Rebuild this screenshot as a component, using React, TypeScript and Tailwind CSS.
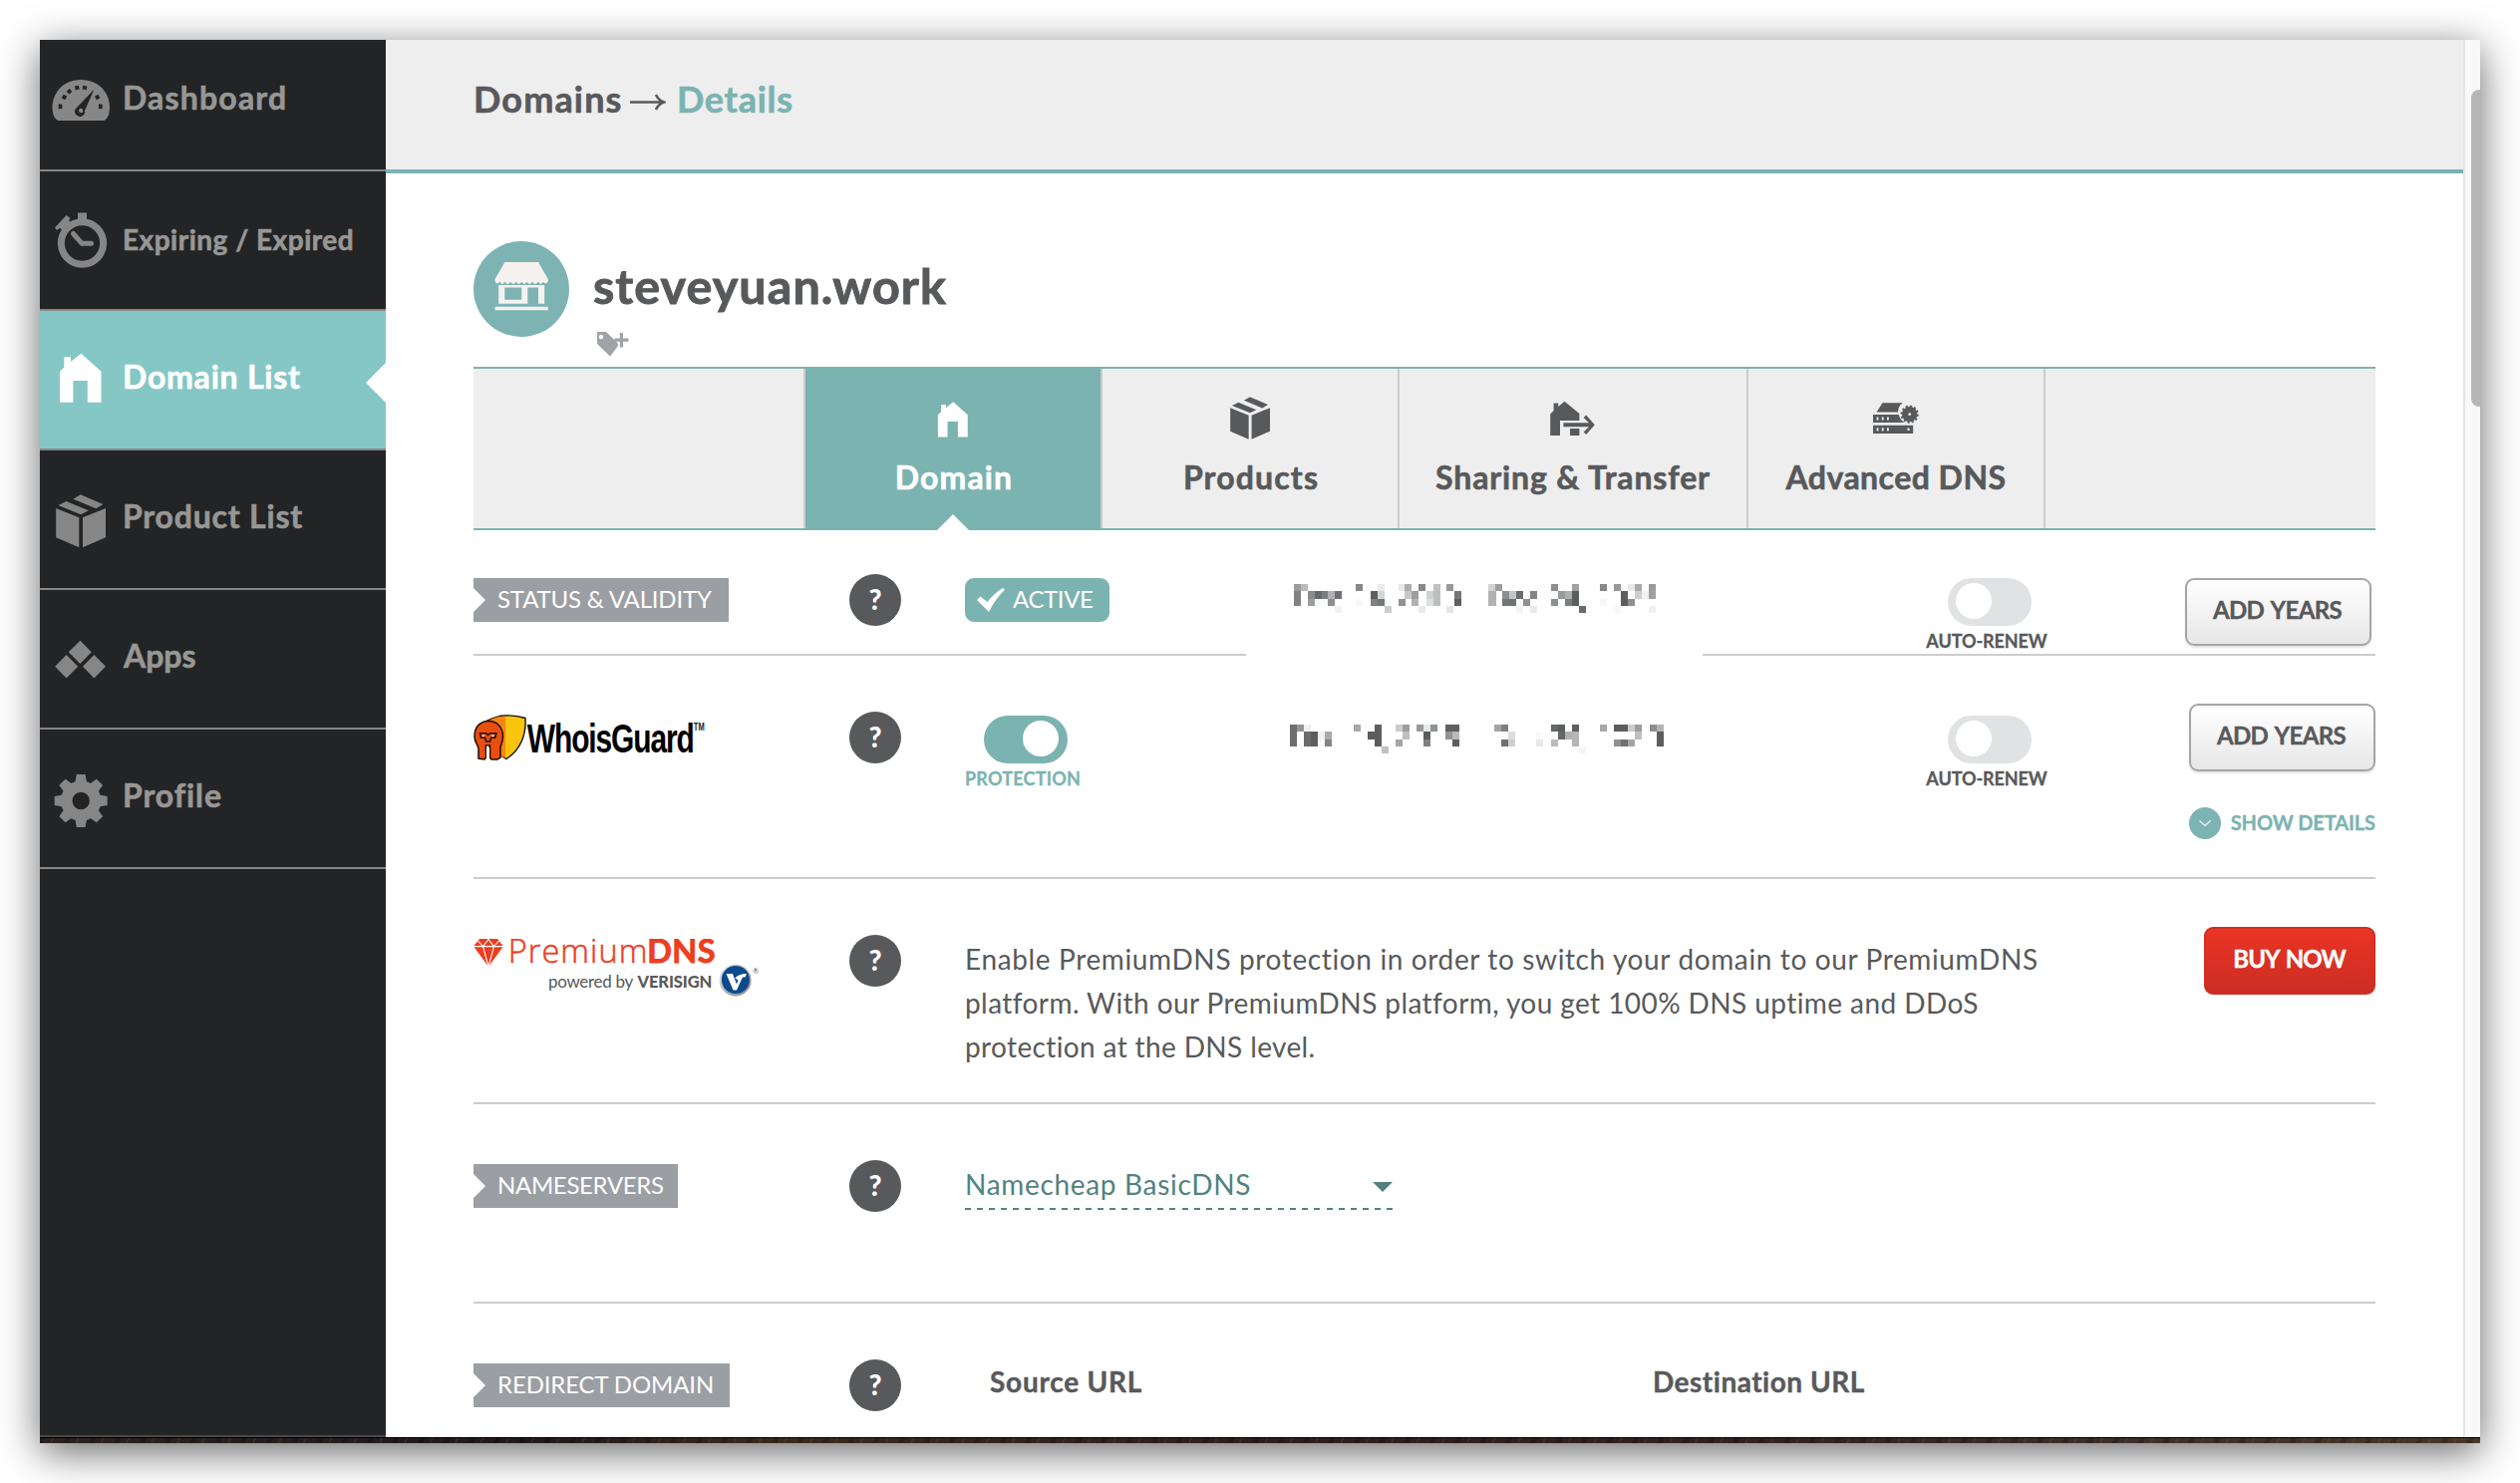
import type { ReactNode } from "react";

const HOUSE =
  "M11 54.7V23.7L15.3 19.5V9.3H22V14L32.4 5.7L52.5 23.7V54.7H38.8V33H24.4V54.7Z";

const BOX =
  "M7.2 21L30.3 30.3V60.3L7.2 50.3ZM34 30.3L57 21V50.3L34 60.3ZM31.9 7.3L54.4 17L47.4 21.3L24.4 11.7ZM17.4 14L40 23.3L32 27.3L9.4 18Z";

const TEETH = [0, 45, 90, 135, 180, 225, 270, 315];

function DashboardIcon() {
  return (
    <svg viewBox="0 0 64 64" className="h-16 w-16" fill="currentColor">
      <path d="M10.500 52C6 52 3.500 45.500 3.500 39C3.500 22.500 16 11 32.200 11C48.500 11 61 22.500 61 39C61 45.500 58.500 52 54 52Z" />
      <g fill="#232426">
        <rect x="9.700" y="35.500" width="3.600" height="4.600" />
        <rect x="13.500" y="26.500" width="4" height="4" transform="rotate(-65 15.500 28.500)" />
        <rect x="18.500" y="20.700" width="4" height="4" transform="rotate(-40 20.500 22.700)" />
        <rect x="26.300" y="17" width="4" height="4" transform="rotate(-12 28.300 19)" />
        <rect x="34" y="17" width="4" height="4" transform="rotate(10 36 19)" />
        <rect x="46.700" y="26.500" width="4" height="4" transform="rotate(65 48.700 28.500)" />
        <rect x="50" y="35.500" width="3.600" height="4.600" />
        <path d="M45.500 20.500L36 42A5 5 0 1 1 28 39Z" />
      </g>
      <circle cx="32.200" cy="42" r="2.200" />
    </svg>
  );
}

function StopwatchIcon() {
  return (
    <svg viewBox="0 0 64 64" className="h-16 w-16" fill="currentColor">
      <circle cx="33.500" cy="35" r="21.200" fill="none" stroke="currentColor" strokeWidth="7" />
      <path d="M29 4.500H38V13H29Z" />
      <path d="M6 19.500L17.500 7L21.500 10L20 12.500L23 15L14.500 23L11 19.800L8 22Z" />
      <path d="M24.500 25.500L33 35.200H42.500" fill="none" stroke="currentColor" strokeWidth="5" strokeLinecap="round" strokeLinejoin="round" />
    </svg>
  );
}

function HouseIcon() {
  return (
    <svg viewBox="0 0 64 64" className="h-16 w-16" fill="currentColor">
      <path d={HOUSE} />
    </svg>
  );
}

function BoxIcon() {
  return (
    <svg viewBox="0 0 64 64" className="h-16 w-16" fill="currentColor">
      <path d={BOX} />
    </svg>
  );
}

function AppsIcon() {
  return (
    <svg viewBox="0 0 64 64" className="h-16 w-16" fill="currentColor">
      <path d="M31.400 13.700L42.800 25.300L31.400 37L19.800 25.300ZM17.600 27.900L29.200 39.700L17.600 51.400L6.200 39.700ZM45.400 27.900L57 39.700L45.400 51.400L34 39.700Z" />
    </svg>
  );
}

function GearIcon() {
  return (
    <svg viewBox="0 0 64 64" className="h-16 w-16" fill="currentColor">
      <circle cx="32.200" cy="34.500" r="14.400" fill="none" stroke="currentColor" strokeWidth="11.400" />
      {TEETH.map((a) => (
        <path key={a} d="M26 18L27.800 8H36.600L38.400 18Z" transform={`rotate(${a} 32.200 34.500)`} />
      ))}
    </svg>
  );
}

function TabHouseIcon() {
  return (
    <svg viewBox="0 0 52 52" className="h-[52px] w-[52px]" fill="currentColor">
      <path d={HOUSE} transform="translate(3 7.200) scale(.719)" />
    </svg>
  );
}

function TabBoxIcon() {
  return (
    <svg viewBox="0 0 52 52" className="h-[52px] w-[52px]" fill="currentColor">
      <path d={BOX} transform="translate(.4 .5) scale(.8)" />
    </svg>
  );
}

function TransferIcon() {
  return (
    <svg viewBox="0 0 52 52" className="h-[52px] w-[52px]" fill="currentColor">
      <path d="M3.200 45V23.500L6.600 20V12.500H11.200V16L17.500 10.700L32.400 23V30H13V45Z" />
      <path d="M23 38H32.400V45H23Z" />
      <path d="M16.400 32.300H42L36.600 27L39.200 24.600L47.800 34.300L39.200 44L36.600 41.600L42 36.300H16.400Z" />
    </svg>
  );
}

function ServerIcon() {
  return (
    <svg viewBox="0 0 52 52" className="h-[52px] w-[52px]" fill="currentColor">
      <path d="M12.500 12.300H32.800C29.500 14.500 28 18 28.200 21.400H6.500ZM3 24H28.700C29.800 28 32 30.700 34.500 32H3ZM3 34.800H43.200V43H3Z" />
      <circle cx="39.700" cy="23.700" r="7.600" />
      <circle cx="39.700" cy="23.700" r="8" fill="none" stroke="currentColor" strokeWidth="2.200" strokeDasharray="2.090 2.090" />
      <g fill="#eeeeee">
        <circle cx="39.700" cy="23.700" r="1.400" />
        {[28, 38.800].map((y) =>
          [7.500, 12.700, 17.900].map((x) => (
            <rect key={`${x}-${y}`} x={x - 0.900} y={y - 1.500} width="1.800" height="3" />
          ))
        )}
        <circle cx="38.500" cy="38.800" r="1.300" />
      </g>
    </svg>
  );
}

function StoreBadge() {
  return (
    <svg viewBox="0 0 96 96" className="h-24 w-24 shrink-0">
      <circle cx="48" cy="48" r="48" fill="#7db3b3" />
      <g fill="#f5f1ee">
        <path d="M31.300 21H65L74.800 38V40.500Q72.500 44.500 70 40.800Q67.500 45 65 40.800Q62 45 59 40.800Q56.200 45 53.500 40.800Q50.800 45 48.200 40.800Q45.500 45 42.800 40.800Q40 45 37.300 40.800Q34.300 45 31.500 40.800Q28.800 45 26.300 40.800Q23.800 44.500 21.600 40.500V38Z" />
        <path fillRule="evenodd" d="M25.200 44H71.200V62.700H65V46.600H54.300V62.700H25.200ZM31.300 46.600V58.700H48.200V46.600Z" />
        <path d="M21.600 65.800H74.800V69.200H21.600Z" />
      </g>
    </svg>
  );
}

function TagPlusIcon() {
  return (
    <svg viewBox="0 0 33 25" className="h-[25px] w-[33px]" fill="#a0a2a6">
      <path fillRule="evenodd" d="M0 0H9L20 10.500Q22 13 20 15.500L13 24.500L0 12ZM4 2.800A2.200 2.200 0 1 0 4 7.200A2.200 2.200 0 1 0 4 2.800Z" />
      <path d="M22.800 1H26V6.500H31.500V9.800H26V15.500H22.800V9.800H17.500V6.500H22.800Z" />
    </svg>
  );
}

function WhoisGuardLogo() {
  return (
    <svg viewBox="0 0 240 48" className="h-12 w-[240px]">
      <path d="M12 7C18 4 24 .8 32 1C39 .6 46 1.600 52 3.500C53 19 48 35 33 44.500L16 34Z" fill="#fbc40e" stroke="#111" strokeWidth="1.400" />
      <path d="M12.700 7.300C18 4.600 24 1.500 32 1.600V43.500L20 38Z" fill="#fb850d" />
      <path d="M1 22C1 11 8 6.500 15 6.500C23 6.500 29.500 12 29.500 22C29.500 28 27 30 27 34V43L24 45H18L16.500 43V31H12.500V43L11 45L5 44V34C4.500 30 1 28 1 22Z" fill="#e94e0f" stroke="#1a0d05" strokeWidth="1.500" />
      <path d="M6.500 18.800H12.800L14.600 20.500L16.400 18.800H22.800L21.800 23.300H17.500L16.600 27H12.600L11.700 23.300H7.500Z" fill="#e94e0f" stroke="#24140c" strokeWidth="1.600" />
      <path d="M8.500 20.500H11.500L10.500 22H9ZM18 20.500H21L20.300 22H18.500Z" fill="#f5e6da" />
      <path d="M13 33.500L14.500 31L16 33.500V46H13Z" fill="#ffffff" />
      <text transform="translate(53.8 38.3) scale(.74 1)" letterSpacing="-1.5" fontFamily="Liberation Sans, sans-serif" fontWeight="700" fontSize="40.500" fill="#000">
        WhoisGuard
      </text>
      <text transform="translate(220.8 15.5) scale(.72 1)" fontFamily="Liberation Sans, sans-serif" fontWeight="700" fontSize="10.500" fill="#222">
        TM
      </text>
    </svg>
  );
}

function PremiumDnsLogo() {
  return (
    <svg viewBox="0 0 290 62" className="h-[62px] w-[290px]">
      <defs>
        <linearGradient id="rim" x1="0" y1="0" x2="1" y2="1">
          <stop offset="0" stopColor="#f2f2f2" />
          <stop offset="1" stopColor="#7c7e82" />
        </linearGradient>
      </defs>
      <path d="M6 0H24L30 7.500L15 28L0 7.500Z" fill="#ee3d1f" />
      <path d="M0 7.600H30M9.500 7.600L15 28L20.500 7.600M4 1.500L9.500 7.600L15 .5L20.500 7.600L26 1.500" fill="none" stroke="#fff" strokeWidth="1.100" />
      <text x="34.700" y="24" letterSpacing="1.050" fontFamily="Open Sans, sans-serif" fontWeight="300" fontSize="32.500" fill="#ee3d1f" stroke="#ee3d1f" strokeWidth=".5">
        Premium
      </text>
      <text x="174.300" y="24" letterSpacing=".3" fontFamily="Lato, sans-serif" fontWeight="700" fontSize="32.500" fill="#ee3d1f" stroke="#ee3d1f" strokeWidth=".8">
        DNS
      </text>
      <text x="75" y="49" letterSpacing="-.3" fontFamily="Lato, sans-serif" fontSize="17" fill="#58595b">
        powered by
      </text>
      <text x="164.500" y="49" letterSpacing="-.1" fontFamily="Lato, sans-serif" fontWeight="900" fontSize="16.500" fill="#58595b">
        VERISIGN
      </text>
      <circle cx="262.600" cy="41.500" r="16" fill="url(#rim)" />
      <circle cx="262.900" cy="41" r="14" fill="#0b4a8c" />
      <path d="M253.500 35H260L264 45.500L265.500 41.500L262.300 39.500C264.500 36.500 268.500 35 274 35L272.500 38.500H270L264 51.500H260.500Z" fill="#fff" />
      <text x="280" y="35" fontFamily="Lato, sans-serif" fontSize="7.500" fill="#58595b">
        ®
      </text>
    </svg>
  );
}

type Cell = [number, string];

const REGISTRATION_CELLS: Cell[][] = [
  [[113, "#9a9a9a"], [134, "#b8b9b8"], [300, "#88888a"], [366, "#ebebeb"], [429, "#e6e8e7"], [447, "#adadad"], [489, "#88898b"], [534, "#c0c2c1"], [573, "#98999b"], [700, "#d0d2d1"], [720, "#9e9e9e"], [888, "#8e8f91"], [951, "#a0a1a3"], [1035, "#88888a"], [1077, "#98999b"], [1119, "#e8eae9"], [1140, "#aaaaaa"], [1182, "#9a9c9b"]],
  [[113, "#808183"], [156, "#8a8b8c"], [176, "#68696b"], [197, "#7c7d7f"], [216, "#b0b0b2"], [237, "#707173"], [345, "#5e5f61"], [366, "#d4d5d7"], [447, "#c8c9cb"], [468, "#9e9e9e"], [513, "#cfd2d0"], [534, "#bcbfbd"], [597, "#767779"], [700, "#b2b2b2"], [741, "#8c8d8e"], [762, "#c4c6c5"], [783, "#6a6b6d"], [825, "#848587"], [909, "#98999a"], [930, "#aeb0ae"], [951, "#5c5d5f"], [1098, "#5c5d5f"], [1140, "#cccccf"], [1161, "#f0f0f0"], [1182, "#a0a1a2"]],
  [[113, "#808183"], [156, "#9c9d9c"], [176, "#fafafa"], [197, "#fafafa"], [216, "#8e8f90"], [300, "#f6f9f6"], [345, "#808180"], [366, "#767779"], [429, "#909192"], [468, "#b2b2b4"], [513, "#dcdfdd"], [534, "#bcbfbd"], [597, "#5e5f61"], [700, "#b2b2b2"], [741, "#747577"], [762, "#707173"], [783, "#f8f8f8"], [804, "#909192"], [888, "#8e8f91"], [930, "#7c7e7d"], [951, "#5c5d5f"], [1035, "#f6f8f6"], [1098, "#5c5d5f"], [1119, "#8e8f90"]],
  [[237, "#f2f2f2"], [387, "#cccecd"], [489, "#ebebeb"], [573, "#e6e6e6"], [783, "#f4f4f4"], [825, "#ebebeb"], [972, "#6a6b6d"], [1077, "#f8f8f8"], [1182, "#f0f2f1"]],
];

const PROTECTION_CELLS: Cell[][] = [
  [[102, "#6c6d6f"], [123, "#929395"], [144, "#f0f0f0"], [294, "#a8a8aa"], [357, "#5c5d5f"], [420, "#cccccc"], [441, "#9c9e9d"], [483, "#98999a"], [504, "#e6e8e7"], [525, "#909192"], [570, "#5e5f61"], [591, "#5e5f61"], [717, "#a4a4a6"], [738, "#7e7e82"], [888, "#666769"], [909, "#5c5d5f"], [951, "#5c5d5f"], [1035, "#a8a8aa"], [1077, "#5c5d5f"], [1098, "#5c5d5f"], [1119, "#cccccc"], [1140, "#9c9e9d"], [1185, "#8c8d8f"], [1205, "#b4b4b4"]],
  [[102, "#6c6d6f"], [144, "#6a6b6d"], [165, "#5c5d5f"], [187, "#f0f0f2"], [207, "#aaaaac"], [336, "#5c5d5f"], [357, "#5c5d5f"], [441, "#bec0bf"], [504, "#5c5d5f"], [570, "#929394"], [591, "#b8b9ba"], [759, "#dcdcde"], [843, "#fafafa"], [909, "#666769"], [930, "#b0b1b2"], [951, "#b4b6b5"], [1140, "#bec0bf"], [1205, "#5c5d5f"]],
  [[102, "#6c6d6f"], [144, "#6a6b6d"], [165, "#5c5d5f"], [187, "#f8f8f8"], [207, "#848587"], [357, "#5c5d5f"], [420, "#a4a4a4"], [504, "#808082"], [591, "#5c5d5f"], [738, "#707173"], [759, "#cfcfd0"], [843, "#e8e8ea"], [888, "#bcbcbc"], [951, "#b4b6b5"], [1077, "#8e8f91"], [1098, "#707173"], [1119, "#a4a4a6"], [1205, "#5c5d5f"]],
  [[378, "#c2c2c4"], [972, "#f6f6fa"]],
];

function PixelatedDates({ rows }: { rows: Cell[][] }) {
  return (
    <svg viewBox="0 0 1260 90" className="h-[30px] w-[420px]" shapeRendering="crispEdges">
      {rows.map((row, r) =>
        row.map(([x, fill]) => <rect key={`${x}-${r}`} x={x} y={r * 22} width="22" height="22" fill={fill} />)
      )}
    </svg>
  );
}

function NavItem({ icon, active, children }: { icon: ReactNode; active?: boolean; children: ReactNode }) {
  return (
    <div
      className={
        active
          ? "relative flex h-[140px] items-center border-b-2 border-[#868686] bg-[#85c7c5] pl-[9px] text-white"
          : "relative flex h-[140px] items-center border-b-2 border-[#868686] pl-[9px] text-[#868686]"
      }
    >
      {icon}
      {children}
      {active && (
        <span className="absolute top-[52px] right-0 h-10 w-5 bg-white [clip-path:polygon(100%_0,100%_100%,0_50%)]" />
      )}
    </div>
  );
}

function Ribbon({ className, children }: { className: string; children: ReactNode }) {
  return (
    <div className="w-[377px] shrink-0">
      <div
        className={`h-11 bg-[#9b9ea3] pl-6 text-[24px] leading-[42px] whitespace-nowrap text-white [clip-path:polygon(0_0,100%_0,100%_100%,0_100%,0_34px,12px_22px,0_10px)] ${className}`}
      >
        {children}
      </div>
    </div>
  );
}

function Help({ className }: { className: string }) {
  return (
    <div className="w-[116px] shrink-0">
      <div className={`h-[52px] w-[52px] rounded-full bg-[#58595b] text-center text-[28px] leading-[51px] font-black text-white ${className}`}>
        ?
      </div>
    </div>
  );
}

function AutoRenew({ className }: { className: string }) {
  return (
    <div className={`ml-[204px] flex w-[163px] shrink-0 flex-col items-center ${className}`}>
      <div className="ml-[5px] h-12 w-[84px] rounded-full bg-[#e0e2e4] pt-[5px] pl-2">
        <div className="h-9 w-9 rounded-full bg-white" />
      </div>
      <div className="mt-[3px] -ml-[1px] text-[18px] leading-6 font-bold tracking-[-0.080px] [-webkit-text-stroke:0.3px]">AUTO-RENEW</div>
    </div>
  );
}

function AddYears() {
  return (
    <div className="flex h-[68px] w-[187px] items-center justify-center rounded-[9px] border-2 border-[#a5a5a5] bg-linear-to-b from-white to-[#e7e7e7] pr-[2px] pb-[5px] text-[24px] font-bold tracking-[-0.600px] [word-spacing:2px] shadow-[0_2px_2px_rgba(0,0,0,0.1)] [-webkit-text-stroke:0.4px]">
      ADD YEARS
    </div>
  );
}

export default function App() {
  return (
    <div className="h-[1488px] w-[2528px] overflow-hidden bg-white p-10 font-['Lato',sans-serif] text-[#58595b]">
      <div className="flex h-[1408px] w-[2448px] flex-col bg-white shadow-[0_9px_38px_rgba(0,0,0,0.6)]">
        <div className="flex h-[1402px] overflow-hidden">
          <aside className="flex w-[347px] shrink-0 flex-col justify-between border-b-2 border-[#454a49] bg-[#232426] font-bold [-webkit-text-stroke:0.6px]">
            <nav className="-mt-2">
              <NavItem icon={<DashboardIcon />}>
                <span className="mb-[6px] ml-[10px] text-[32px] tracking-[1.180px] text-[#979794]">Dashboard</span>
              </NavItem>
              <NavItem icon={<StopwatchIcon />}>
                <span className="mb-[3px] ml-[10px] text-[28px] tracking-[0.500px] whitespace-nowrap text-[#979794]">Expiring / Expired</span>
              </NavItem>
              <NavItem icon={<HouseIcon />} active>
                <span className="mb-[6px] ml-[10px] text-[32px] tracking-[0.770px]">Domain List</span>
              </NavItem>
              <NavItem icon={<BoxIcon />}>
                <span className="mb-[6px] ml-[10px] text-[32px] tracking-[0.800px] text-[#979794]">Product List</span>
              </NavItem>
              <NavItem icon={<AppsIcon />}>
                <span className="mb-[6px] ml-[11px] text-[32px] tracking-[0px] text-[#979794]">Apps</span>
              </NavItem>
              <NavItem icon={<GearIcon />}>
                <span className="mb-[6px] ml-[10px] text-[32px] tracking-[0.890px] text-[#979794] [font-variant-ligatures:none]">Profile</span>
              </NavItem>
            </nav>
          </aside>

          <main className="w-[2084px] shrink-0">
            <header className="flex h-[134px] items-start border-b-4 border-[#7bb3b1] bg-[#eeeeee] pt-[39px] pl-[88px] text-[36px] leading-[40px] font-bold [-webkit-text-stroke:0.6px]">
              <span className="w-[157px] tracking-[1.150px]">Domains</span>
              <svg viewBox="0 0 36 24" className="mt-3 h-6 w-9" fill="none" stroke="#58595b" strokeWidth="2.600">
                <path d="M0 11.500H33" />
                <path d="M26 4Q28.500 9.500 34 11.500Q28.500 13.500 26 19" />
              </svg>
              <span className="ml-[11px] tracking-[0.700px] text-[#7bb3b1]">Details</span>
            </header>

            <div className="px-[88px]">
              <div className="flex h-[194px] pt-[68px]">
                <StoreBadge />
                <div className="ml-6">
                  <h1 className="mt-[14px] text-[48.500px] leading-[60px] font-bold tracking-[1.050px] [-webkit-text-stroke:0.9px]">steveyuan.work</h1>
                  <div className="mt-[17px] ml-1">
                    <TagPlusIcon />
                  </div>
                </div>
              </div>

              <div className="flex h-[164px] w-[1908px] border-y-2 border-[#7bb3b1] bg-[#eeeeee] text-[32px] leading-[40px] font-bold [-webkit-text-stroke:0.6px]">
                <div className="w-[333px] shrink-0 border-r-2 border-[#cccccc]" />
                <div className="relative -mb-[2px] flex w-[296px] shrink-0 flex-col items-center bg-[#7bb3b1] pt-[22px] text-white">
                  <TabHouseIcon />
                  <div className="mt-[15px] ml-[2px] tracking-[1.150px]">Domain</div>
                  <span className="absolute bottom-0 left-1/2 h-4 w-8 -translate-x-1/2 bg-white [clip-path:polygon(0_100%,50%_0,100%_100%)]" />
                </div>
                <div className="flex w-[300px] shrink-0 flex-col items-center border-x-2 border-[#cccccc] pt-[22px]">
                  <TabBoxIcon />
                  <div className="mt-[15px] ml-[2px] tracking-[1.150px]">Products</div>
                </div>
                <div className="flex w-[350px] shrink-0 flex-col items-center border-r-2 border-[#cccccc] pt-[22px]">
                  <TransferIcon />
                  <div className="mt-[15px] tracking-[0.850px]">Sharing &amp; Transfer</div>
                </div>
                <div className="flex w-[298px] shrink-0 flex-col items-center border-r-2 border-[#cccccc] pt-[22px]">
                  <ServerIcon />
                  <div className="mt-[15px] tracking-[0.460px]">Advanced DNS</div>
                </div>
              </div>

              <section className="flex h-[126px] w-[1908px] border-b-2 border-[#cccccc]">
                <Ribbon className="mt-12 w-[256px] tracking-[-0.180px]">STATUS &amp; VALIDITY</Ribbon>
                <Help className="mt-11" />
                <div className="w-[282px] shrink-0">
                  <div className="mt-12 flex h-11 w-[145px] items-center rounded-[9px] bg-[#7bb3b1] pl-3 text-white">
                    <svg viewBox="0 0 28 24" className="h-6 w-7" fill="currentColor">
                      <path d="M0 12L3.500 8.500L10.500 14Q17 5.500 26 0L28 1.800Q18.500 11 12 24Z" />
                    </svg>
                    <span className="mb-[2px] ml-2 text-[24px] tracking-[-0.400px]">ACTIVE</span>
                  </div>
                </div>
                <div className="relative -mb-[2px] w-[458px] shrink-0 bg-white pt-[54px] pl-[10px]">
                  <PixelatedDates rows={REGISTRATION_CELLS} />
                </div>
                <AutoRenew className="mt-12" />
                <div className="mt-12 mr-1 ml-auto">
                  <AddYears />
                </div>
              </section>

              <section className="flex h-[224px] w-[1908px] border-b-2 border-[#cccccc]">
                <div className="w-[377px] shrink-0 pt-[59px]">
                  <WhoisGuardLogo />
                </div>
                <Help className="mt-14" />
                <div className="w-[282px] shrink-0 pt-[60px]">
                  <div className="ml-[19px] h-12 w-[84px] rounded-full bg-[#7bb3b1] pt-[5px] pl-[39px]">
                    <div className="h-9 w-9 rounded-full bg-white" />
                  </div>
                  <div className="mt-[3px] text-[18px] leading-6 font-bold tracking-[0.210px] text-[#7bb3b1] [-webkit-text-stroke:0.3px]">PROTECTION</div>
                </div>
                <div className="w-[458px] shrink-0 pt-[69px] pl-[10px]">
                  <PixelatedDates rows={PROTECTION_CELLS} />
                </div>
                <AutoRenew className="mt-[60px]" />
                <div className="mt-12 ml-auto flex flex-col items-end">
                  <AddYears />
                  <div className="mt-9 flex items-center text-[20px] font-bold tracking-[-0.100px] text-[#7bb3b1] [-webkit-text-stroke:0.3px]">
                    <svg viewBox="0 0 32 32" className="h-8 w-8">
                      <circle cx="16" cy="16" r="16" fill="#7db3b3" />
                      <path d="M10.500 13.500L16 18.500L21.500 13.500" fill="none" stroke="#e4efef" strokeWidth="1.600" />
                    </svg>
                    <span className="mb-[3px] ml-[10px] leading-6">SHOW DETAILS</span>
                  </div>
                </div>
              </section>

              <section className="flex h-[226px] w-[1908px] border-b-2 border-[#cccccc]">
                <div className="w-[377px] shrink-0 pt-[60px]">
                  <PremiumDnsLogo />
                </div>
                <Help className="mt-14" />
                <p className="pt-[58px] text-[28px] leading-[44px] whitespace-nowrap">
                  <span className="block tracking-[0.630px]">
                    Enable PremiumDNS protection in order to switch your domain to our PremiumDNS
                  </span>
                  <span className="block tracking-[0.420px]">
                    platform. With our PremiumDNS platform, you get 100% DNS uptime and DDoS
                  </span>
                  <span className="block tracking-[0.370px]">protection at the DNS level.</span>
                </p>
                <div className="mt-12 ml-auto flex h-[68px] w-[172px] items-center justify-center rounded-[9px] border-2 border-[#d02f22] bg-linear-to-b from-[#ea3425] to-[#cb2e23] pr-[1px] pb-[5px] text-[24px] font-bold tracking-[-0.900px] text-white [word-spacing:2px] [-webkit-text-stroke:0.4px]">
                  BUY NOW
                </div>
              </section>

              <section className="flex h-[200px] w-[1908px] border-b-2 border-[#cccccc]">
                <Ribbon className="mt-[60px] w-[205px] tracking-[-0.330px]">NAMESERVERS</Ribbon>
                <Help className="mt-14" />
                <div className="mt-[58px] h-12 w-[429px] text-[#528280]">
                  <div className="flex items-start justify-between">
                    <span className="text-[28px] leading-[44px] tracking-[0.680px]">Namecheap BasicDNS</span>
                    <span className="mt-5 h-[10px] w-5 bg-[#528280] [clip-path:polygon(0_0,100%_0,50%_100%)]" />
                  </div>
                  <div className="mt-[2px] h-[2px] bg-[repeating-linear-gradient(90deg,#528280_0_6px,transparent_6px_12.085px)]" />
                </div>
              </section>

              <section className="flex h-[134px] w-[1908px]">
                <Ribbon className="mt-[60px] w-[257px] tracking-[-0.130px]">REDIRECT DOMAIN</Ribbon>
                <Help className="mt-14" />
                <div className="flex pt-[56px] pl-[25px] text-[28px] leading-[44px] font-bold [-webkit-text-stroke:0.4px]">
                  <span className="w-[665px] tracking-[0.740px]">Source URL</span>
                  <span className="tracking-[0.500px]">Destination URL</span>
                </div>
              </section>
            </div>
          </main>

          <div className="flex w-[17px] shrink-0 justify-end border-l-2 border-[#e4e4e4] bg-[#f9f9f9] pt-[50px]">
            <div className="h-[318px] w-[9px] rounded-l-[8px] bg-[#b6b6b6]" />
          </div>
        </div>
        <div className="h-[6px] border-t border-black bg-[repeating-linear-gradient(115deg,rgba(0,0,0,0.2)_0_5px,transparent_5px_11px,rgba(150,120,90,0.12)_11px_13px,transparent_13px_23px),linear-gradient(90deg,#2c2120,#20181a_20%,#3a2a1c_30%,#2e1d1d_50%,#33201f_70%,#3b3028_85%,#4a3527)]" />
      </div>
    </div>
  );
}
